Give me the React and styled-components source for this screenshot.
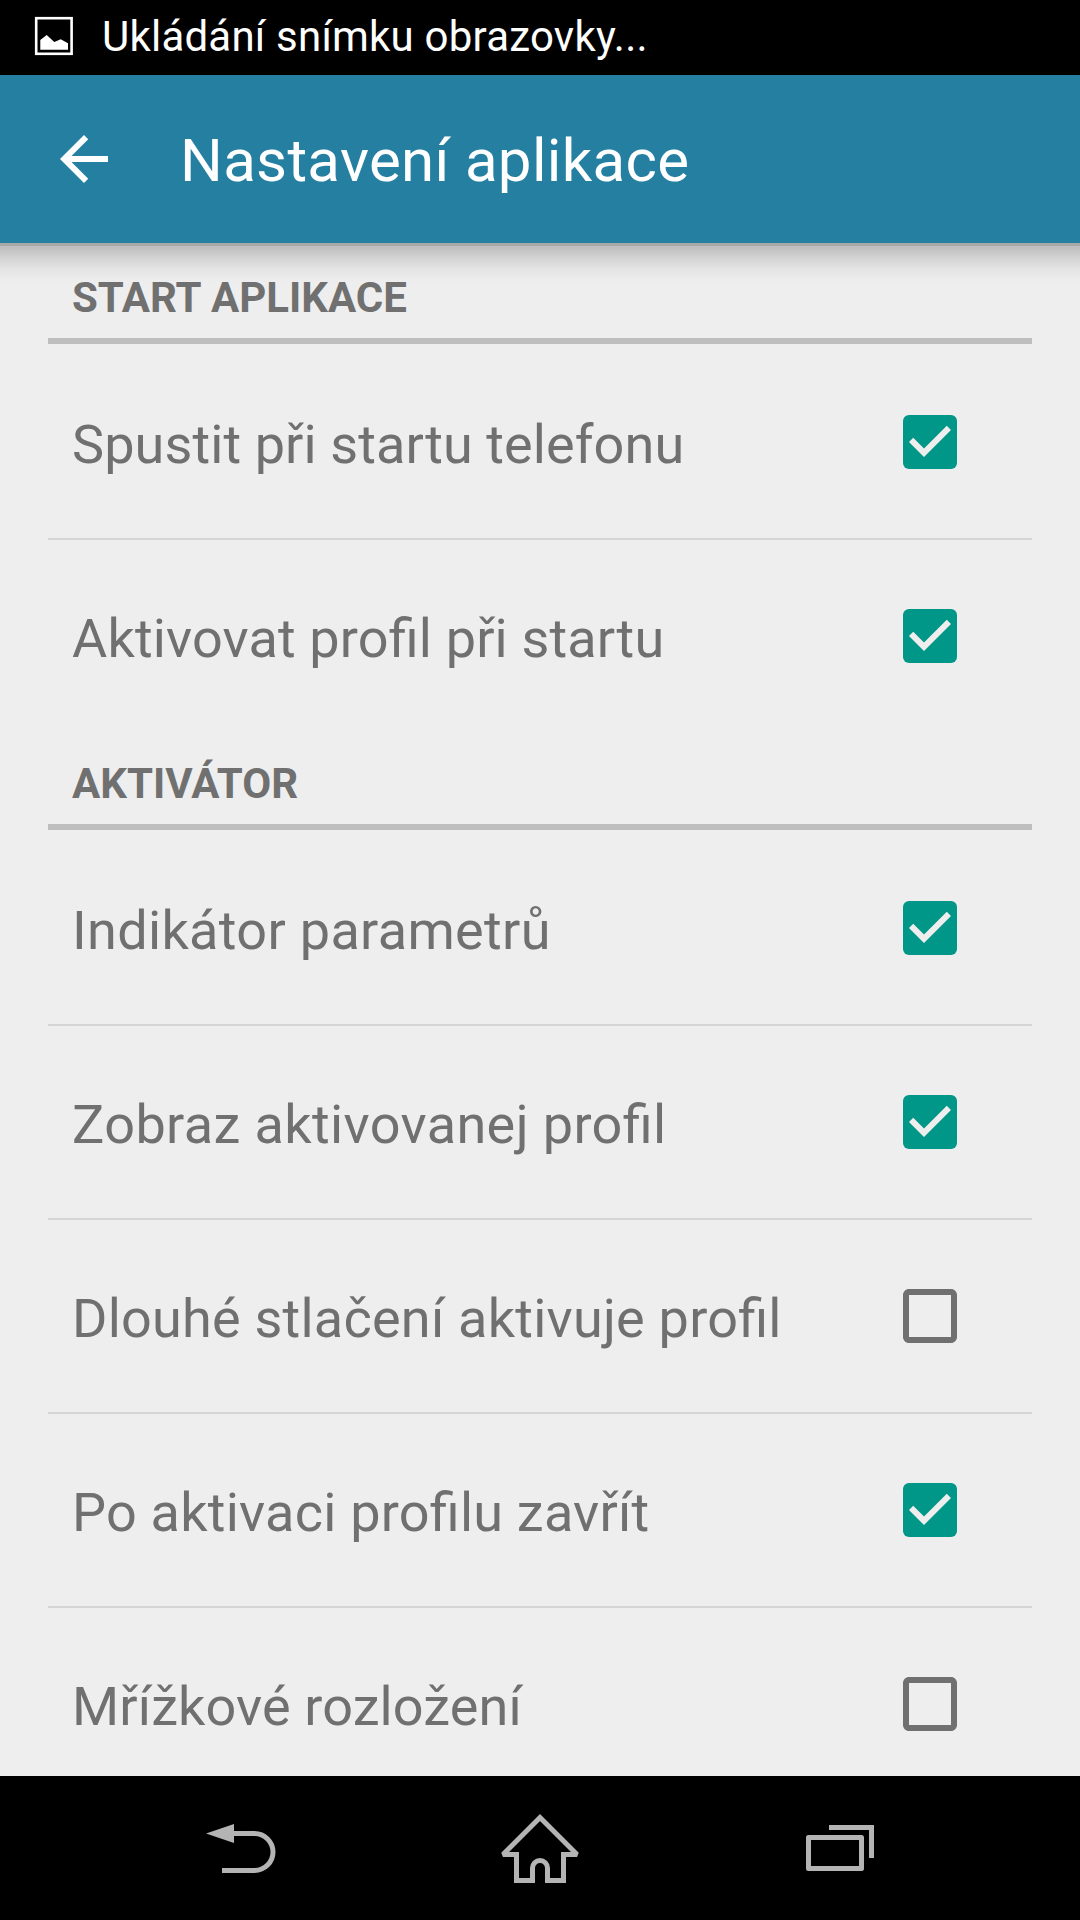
import React, { useState } from 'react';
import styled, { createGlobalStyle } from 'styled-components';

const GlobalStyle = createGlobalStyle`
    * {
        box-sizing: border-box;
    }

    body {
        margin: 0;
        background: #eee;
        font-family: Roboto, sans-serif;
        /* keeps the fi ligature when letter-spacing is set */
        font-feature-settings: 'liga' 1;
    }
`;

const Screen = styled.div`
    display: flex;
    flex-direction: column;
    width: 1080px;
    height: 1920px;
    overflow: hidden;
    background: #eee;
`;

const StatusBar = styled.div`
    display: flex;
    align-items: center;
    flex: none;
    height: 75px;
    padding-left: 32px;
    gap: 26px;
    background: #000;
    color: #fff;
    font-size: 42px;
    line-height: 72px;

    svg {
        margin-bottom: 3px;
    }

    span {
        letter-spacing: 0.22px;
        margin-top: -1px;
    }
`;

const AppBar = styled.header`
    position: relative;
    display: flex;
    align-items: center;
    flex: none;
    height: 168px;
    padding-left: 48px;
    background: #257fa1;
    color: #fff;

    /* drop shadow over the list */
    &::after {
        content: '';
        position: absolute;
        top: 100%;
        left: 0;
        right: 0;
        height: 39px;
        background: linear-gradient(#a8a8a8 0, #a8a8a8 3px, #bcbcbc 3px, #d3d3d3 15px, #e4e4e4 26px, #eee 39px);
    }
`;

const BackButton = styled.button`
    display: flex;
    padding: 0;
    border: 0;
    background: none;
    color: inherit;
`;

const Title = styled.h1`
    margin: 4px 0 0 60px;
    font-size: 60px;
    font-weight: 400;
    line-height: 72px;
    letter-spacing: 0.33px;
`;

const List = styled.main`
    flex: 1;
    min-height: 0;
    overflow: hidden;
    padding: 5px 48px 0;
    color: #707070;
`;

const SectionHeader = styled.h2`
    position: relative;
    z-index: 1;
    display: flex;
    align-items: center;
    height: 96px;
    margin: 0 0 2px;
    padding: 9px 24px 0;
    border-bottom: 6px solid #bebebe;
    font-size: 42px;
    font-weight: 700;
    line-height: 50px;
`;

const Row = styled.label`
    display: flex;
    align-items: center;
    justify-content: space-between;
    height: 194px;
    padding: 0 66px 0 24px;
    border-bottom: 2px solid ${p => (p.$last ? 'transparent' : '#d5d5d5')};
    font-size: 54px;
    line-height: 64px;
    letter-spacing: ${p => p.$tracking}px;

    span {
        margin-top: 6px;
        white-space: nowrap;
    }

    input {
        display: none;
    }
`;

const NavBar = styled.nav`
    display: flex;
    align-items: center;
    justify-content: center;
    gap: 180px;
    flex: none;
    height: 144px;
    background: #000;

    svg {
        fill: none;
        stroke: #b4b4b4;
        stroke-width: 5;
        stroke-miterlimit: 2;
    }
`;

const PictureIcon = () => (
    <svg width="44" height="44" viewBox="32 14 44 44">
        <rect x="36.2" y="18.2" width="35.4" height="35.6" fill="none" stroke="#fff" strokeWidth="2.6" />
        <path d="M40.3 49.7V40l6.4-5 7.6 7 6.4-2.7 7.3 4v6.4z" fill="#fff" />
    </svg>
);

const BoxIcon = ({ checked }) => (
    <svg width="72" height="72" viewBox="0 0 24 24">
        {checked ? (
            <>
                <rect x="3" y="3" width="18" height="18" rx="2" fill="#009688" />
                <path d="M10 17l-5-5 1.41-1.41L10 14.17l7.59-7.59L19 8z" fill="#eee" />
            </>
        ) : (
            <path
                d="M19 5v14H5V5h14m0-2H5c-1.1 0-2 .9-2 2v14c0 1.1.9 2 2 2h14c1.1 0 2-.9 2-2V5c0-1.1-.9-2-2-2z"
                fill="#707070"
            />
        )}
    </svg>
);

const sections = [
    {
        title: 'START APLIKACE',
        items: [
            { label: 'Spustit při startu telefonu', on: true, tracking: 0.1 },
            { label: 'Aktivovat profil při startu', on: true, tracking: 0.16 },
        ],
    },
    {
        title: 'AKTIVÁTOR',
        items: [
            { label: 'Indikátor parametrů', on: true, tracking: 0.33 },
            { label: 'Zobraz aktivovanej profil', on: true, tracking: 0.39 },
            { label: 'Dlouhé stlačení aktivuje profil', on: false, tracking: 0.23 },
            { label: 'Po aktivaci profilu zavřít', on: true, tracking: 0.23 },
            { label: 'Mřížkové rozložení', on: false, tracking: 0.12 },
        ],
    },
];

function Preference({ label, on, tracking, last }) {
    const [checked, setChecked] = useState(on);

    return (
        <Row $last={last} $tracking={tracking}>
            <span>{label}</span>
            <input type="checkbox" checked={checked} onChange={e => setChecked(e.target.checked)} />
            <BoxIcon checked={checked} />
        </Row>
    );
}

export default function App() {
    return (
        <Screen>
            <GlobalStyle />
            <StatusBar>
                <PictureIcon />
                <span>Ukládání snímku obrazovky...</span>
            </StatusBar>
            <AppBar>
                <BackButton>
                    <svg width="72" height="72" viewBox="0 0 24 24" fill="currentColor">
                        <path d="M20 11H7.83l5.59-5.59L12 4l-8 8 8 8 1.41-1.41L7.83 13H20z" />
                    </svg>
                </BackButton>
                <Title>Nastavení aplikace</Title>
            </AppBar>
            <List>
                {sections.map(s => (
                    <React.Fragment key={s.title}>
                        <SectionHeader>{s.title}</SectionHeader>
                        {s.items.map((item, i) => (
                            <Preference key={item.label} {...item} last={i === s.items.length - 1} />
                        ))}
                    </React.Fragment>
                ))}
            </List>
            <NavBar>
                <svg width="120" height="144" viewBox="180 1776 120 144">
                    <path d="M232 1833.5h22.5a18.5 18.5 0 0 1 0 37H222" />
                    <path d="M206 1833.6l28-9.6v19z" fill="#b4b4b4" stroke="none" />
                </svg>
                <svg width="120" height="144" viewBox="480 1776 120 144">
                    <path d="M540 1817.5l37 37h-13.5v26h-16V1868a7.5 7.5 0 0 0-15 0v12.5h-16v-26H503z" />
                </svg>
                <svg width="120" height="144" viewBox="780 1776 120 144">
                    <rect x="808.5" y="1837.5" width="53" height="31" strokeLinejoin="round" />
                    <path d="M829 1827.5h42.5V1858" />
                </svg>
            </NavBar>
        </Screen>
    );
}
